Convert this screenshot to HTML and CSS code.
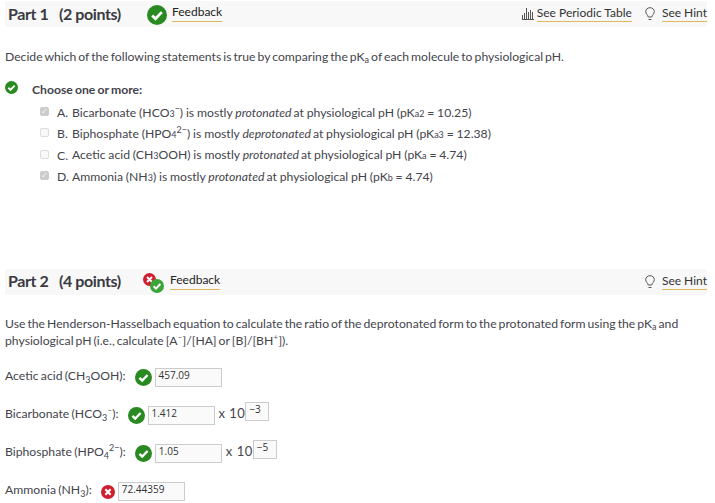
FILE: index.html
```html
<!DOCTYPE html>
<html lang="en">
<head>
  <meta charset="UTF-8" />
  <title>Part 1 and Part 2</title>
  <link rel="stylesheet" href="styles.css">
</head>
<body>
  <svg class="defs" width="0" height="0">
    <symbol id="ok" viewBox="0 0 20 20">
      <circle cx="10" cy="10" r="10" fill="#2a8a22" />
      <path d="M5.2 10.4l3.3 3.3 6.3-6.6" fill="none" stroke="#fff" stroke-width="2.8" />
    </symbol>
    <symbol id="okl" viewBox="0 0 20 20">
      <circle cx="10" cy="10" r="10" fill="#3ba53a" />
      <path d="M5.2 10.4l3.3 3.3 6.3-6.6" fill="none" stroke="#fff" stroke-width="2.8" />
    </symbol>
    <symbol id="bad" viewBox="0 0 20 20">
      <circle cx="10" cy="10" r="10" fill="#cf1f2e" />
      <path d="M6.2 6.2l7.6 7.6M13.8 6.2l-7.6 7.6" fill="none" stroke="#fff" stroke-width="3" />
    </symbol>
  </svg>

  <!-- Part 1 -->
  <section class="part part-one">
    <header class="part-bar">
      <h2>Part 1 <span class="points">(2 points)</span></h2>
      <svg class="icon-big"><use href="#ok" /></svg>
      <a class="link feedback">Feedback</a>
      <span class="bar-right">
        <svg class="tool-icon" viewBox="0 0 12 13"><path d="M0 12h12v1H0zM0 8h1v4H0zM2 6h1v6H2zM4 1h1v11H4zM6 5h1v7H6zM8 3h1v9H8zM10 5h1v7h-1z" fill="#555" /></svg>
        <a class="link">See Periodic Table</a>
        <svg class="hint-icon" viewBox="0 0 10 14"><path d="M3.200 10C3 8 .7 7 .7 4.600.7 2.300 2.600.7 5 .7s4.300 1.600 4.300 3.900C9.300 7 7 8 6.800 10zM3.500 12.500h3" fill="none" stroke="#555" /></svg>
        <a class="link">See Hint</a>
      </span>
    </header>

    <p class="prompt">Decide which of the following statements is true by comparing the pK<sub>a</sub> of each molecule to physiological pH.</p>

    <div class="choose-row">
      <svg class="icon-small"><use href="#ok" /></svg>
      <strong>Choose one or more:</strong>
    </div>

    <ul class="options">
      <li><span class="box checked">✓</span><span class="letter">A.</span><span>Bicarbonate (HCO<small>3</small><sup>−</sup>) is mostly <em>protonated</em>at physiological pH (pK<small>a2</small> = 10.25)</span></li>
      <li><span class="box"></span><span class="letter">B.</span><span>Biphosphate (HPO<small>4</small><sup>2−</sup>) is mostly <em>deprotonated</em>at physiological pH (pK<small>a3</small> = 12.38)</span></li>
      <li><span class="box"></span><span class="letter">C.</span><span>Acetic acid (CH<small>3</small>OOH) is mostly <em>protonated</em>at physiological pH (pK<small>a</small> = 4.74)</span></li>
      <li><span class="box checked">✓</span><span class="letter">D.</span><span>Ammonia (NH<small>3</small>) is mostly <em>protonated</em>at physiological pH (pK<small>b</small> = 4.74)</span></li>
    </ul>
  </section>

  <!-- Part 2 -->
  <section class="part part-two">
    <header class="part-bar">
      <h2>Part 2 <span class="points">(4 points)</span></h2>
      <span class="mixed-icon">
        <svg class="mixed-bad"><use href="#bad" /></svg>
        <svg class="mixed-ok"><use href="#okl" /></svg>
      </span>
      <a class="link feedback">Feedback</a>
      <span class="bar-right">
        <svg class="hint-icon" viewBox="0 0 10 14"><path d="M3.200 10C3 8 .7 7 .7 4.600.7 2.300 2.600.7 5 .7s4.300 1.600 4.300 3.900C9.300 7 7 8 6.800 10zM3.500 12.500h3" fill="none" stroke="#555" /></svg>
        <a class="link">See Hint</a>
      </span>
    </header>

    <p class="prompt">Use the Henderson-Hasselbach equation to calculate the ratio of the deprotonated form to the protonated form using the pK<sub>a</sub> and<br>physiological pH (i.e., calculate [A<sup class="mini">−</sup>]/[HA] or [B]/[BH<sup class="mini">+</sup>]).</p>

    <div class="answer">
      <span class="answer-label">Acetic acid (CH<sub>3</sub>OOH):</span>
      <svg class="icon-mid"><use href="#ok" /></svg>
      <span class="field">457.09</span>
    </div>
    <div class="answer">
      <span class="answer-label">Bicarbonate (HCO<sub>3</sub><sup class="mini">−</sup>):</span>
      <svg class="icon-mid"><use href="#ok" /></svg>
      <span class="field">1.412</span>
      <span class="times">x 10</span>
      <span class="field exp">−3</span>
    </div>
    <div class="answer">
      <span class="answer-label">Biphosphate (HPO<sub>4</sub><sup>2−</sup>):</span>
      <svg class="icon-mid"><use href="#ok" /></svg>
      <span class="field">1.05</span>
      <span class="times">x 10</span>
      <span class="field exp">−5</span>
    </div>
    <div class="answer">
      <span class="answer-label">Ammonia (NH<sub>3</sub>):</span>
      <svg class="icon-tiny"><use href="#bad" /></svg>
      <span class="field">72.44359</span>
    </div>
  </section>
</body>
</html>
```

FILE: styles.css
```css
html, body {
  height: 503px;
  overflow: hidden;
}

body {
  margin: 0;
  padding: 1px 8px 0 5px;
  background: #fff;
  color: #44444c;
  font-family: 'Lato', sans-serif;
  font-size: 12.200px;
  line-height: 17px;
  word-spacing: -0.800px;
}

.defs {
  display: block;
  height: 0;
}

.part-bar {
  display: flex;
  align-items: flex-start;
  height: 26px;
  background: #f8f8f8;
  word-spacing: 0;
}

h2 {
  margin: 4px 0 0 3px;
  width: 135px;
  font-size: 16px;
  line-height: 18px;
  font-weight: 700;
  letter-spacing: -0.400px;
  color: #3a3a42;
}

.part-two h2 {
  margin-top: 3px;
}

.points {
  margin-left: 7px;
}

.link {
  display: block;
  height: 17px;
  border-bottom: 1px solid #e0b95f;
  color: #333;
  font-size: 12px;
  line-height: 15px;
}

.feedback {
  margin: 3px 0 0 5px;
  color: #222;
}

.icon-big {
  width: 20px;
  height: 20px;
  margin: 4px 0 0 4px;
}

.bar-right {
  display: flex;
  align-items: flex-start;
  margin: 3px 0 0 auto;
}

.bar-right .link {
  line-height: 17px;
}

.tool-icon {
  width: 12px;
  height: 13px;
  margin: 3px 3px 0 0;
}

.hint-icon {
  width: 10px;
  height: 14px;
  margin: 3px 7px 0 13px;
}

.prompt {
  margin: 21px 0 0;
  width: 690px;
  word-spacing: -1.100px;
}

.part-two .prompt {
  margin-top: 20px;
}

sub, sup {
  font-size: 9px;
  line-height: 0;
}

.prompt sub {
  vertical-align: -2px;
}

.mini {
  margin: 0 0.500px;
  font-size: 7px;
}

small {
  font-size: 9px;
}

.choose-row {
  display: flex;
  align-items: center;
  height: 17px;
  margin-top: 16px;
}

.icon-small {
  width: 13px;
  height: 13px;
  margin: -5px 14px 0 0;
}

.options {
  list-style: none;
  margin: 4px 0 0;
  padding: 0 0 0 35px;
  word-spacing: -0.300px;
}

.options li {
  display: flex;
  align-items: center;
  height: 21.300px;
}

.options em {
  margin-right: 2px;
}

.box {
  box-sizing: border-box;
  width: 9px;
  height: 9px;
  margin: -2px 8px 0 0;
  border: 1px solid #dcdcdc;
  border-radius: 2px;
  background: #f8f8f8;
  color: #f8f8f8;
  font-size: 8px;
  line-height: 7px;
  text-align: center;
}

.box.checked {
  background: #cbcbcb;
  border-color: #cbcbcb;
}

.letter {
  width: 15px;
}

.part-two {
  margin-top: 82px;
}

.answer {
  display: flex;
  align-items: center;
  height: 19px;
  margin-top: 19px;
}

.answer-label {
  margin-bottom: 4px;
}

.icon-mid {
  width: 17px;
  height: 17px;
  margin: 0 3px 0 9px;
}

.icon-tiny {
  width: 14px;
  height: 14px;
  margin: 0 3px 0 9px;
}

.field {
  box-sizing: border-box;
  width: 67px;
  height: 19px;
  padding-left: 3px;
  border: 1px solid #ccc;
  background: #fafafa;
  color: #333;
  font-family: 'Open Sans', sans-serif;
  font-size: 10px;
  line-height: 13px;
  word-spacing: 0;
}

.times {
  margin: 0 0 4px 4px;
  font-size: 13px;
  letter-spacing: 0.500px;
  word-spacing: 0;
}

.exp {
  align-self: flex-start;
  width: 24px;
  margin: -4px 0 0 0;
}

.mixed-icon {
  position: relative;
  width: 21px;
  height: 20px;
  margin: 4px 6px 0 0;
}

.mixed-bad {
  position: absolute;
  left: 0;
  top: 0;
  width: 13px;
  height: 13px;
}

.mixed-ok {
  position: absolute;
  left: 7px;
  top: 6px;
  width: 14px;
  height: 14px;
}

.part-two .feedback {
  margin-left: 0;
}
```
